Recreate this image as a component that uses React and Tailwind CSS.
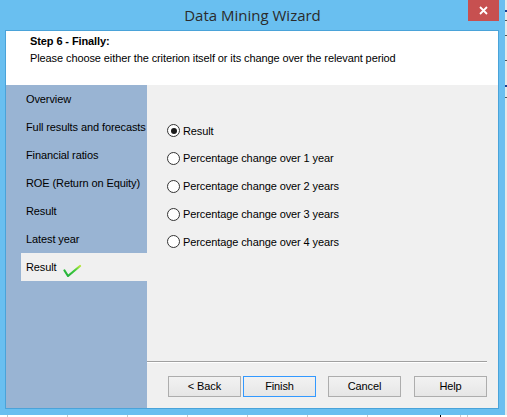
import React from "react";

const navItems = [
  "Overview",
  "Full results and forecasts",
  "Financial ratios",
  "ROE (Return on Equity)",
  "Result",
  "Latest year",
];

const options = [
  "Result",
  "Percentage change over 1 year",
  "Percentage change over 2 years",
  "Percentage change over 3 years",
  "Percentage change over 4 years",
];

function Check() {
  return (
    <svg width="19" height="20" viewBox="0 0 19 20" className="ml-[6px] shrink-0">
      <defs>
        <linearGradient id="chk" x1="0" y1="1" x2="1" y2="0">
          <stop offset="0" stopColor="#1fae3a" />
          <stop offset="0.6" stopColor="#3cc83c" />
          <stop offset="1" stopColor="#b7e63a" />
        </linearGradient>
      </defs>
      <path
        d="M1.5 13.5 L5 19 L17 9"
        fill="none"
        stroke="url(#chk)"
        strokeWidth="2.2"
        strokeLinecap="round"
        strokeLinejoin="round"
      />
    </svg>
  );
}

function Radio({ checked }) {
  return (
    <span className="w-[13px] h-[13px] rounded-full border border-[#333333] bg-white flex items-center justify-center shrink-0">
      {checked && <span className="w-[6px] h-[6px] rounded-full bg-[#1a1a1a]" />}
    </span>
  );
}

function Btn({ children, def, className = "" }) {
  return (
    <div
      className={
        "w-[73px] h-[21px] flex items-center justify-center border bg-gradient-to-b from-[#f2f2f2] to-[#e6e6e6] text-black " +
        (def ? "border-[#3399ff] " : "border-[#adadad] ") +
        className
      }
    >
      {children}
    </div>
  );
}

export default function App() {
  const font = { fontFamily: '"Liberation Sans", Arial, sans-serif' };
  return (
    <div className="w-[507px] h-[417px] bg-white overflow-hidden flex flex-col text-[11px] tracking-[-0.1px]" style={font}>
      <div className="flex">
        {/* Window */}
        <div className="w-[505px] h-[415px] bg-[#69bff0] flex flex-col">
          {/* Title bar */}
          <div className="h-[30px] relative flex items-center justify-center shrink-0">
            <span
              className="text-[15px] text-[#2b2b2b] leading-none pt-[1px] tracking-normal"
              style={{ fontFamily: '"Open Sans", "Noto Sans", sans-serif' }}
            >
              Data Mining Wizard
            </span>
            <div className="absolute top-0 right-[6px] w-[31px] h-[21px] bg-[#c75050] flex items-center justify-center">
              <svg width="9" height="9" viewBox="0 0 9 9">
                <path d="M1 1 L8 8 M8 1 L1 8" stroke="white" strokeWidth="1.8" />
              </svg>
            </div>
          </div>
          {/* Client area */}
          <div className="ml-[5px] w-[494px] h-[379px] border border-[#4aa3d9] flex flex-col">
            <div className="h-[54px] bg-white pl-[24px] pt-[2px] shrink-0">
              <div className="font-bold leading-[16px] text-black">Step 6 - Finally:</div>
              <div className="leading-[16px] mt-[1px] text-black">
                Please choose either the criterion itself or its change over the relevant period
              </div>
            </div>
            <div className="flex flex-1">
              {/* Sidebar */}
              <div className="w-[141px] bg-[#99b4d3] flex flex-col shrink-0">
                {navItems.map((t, i) => (
                  <div key={i} className="h-[28px] ml-[15px] pl-[5px] flex items-center text-black whitespace-nowrap">
                    {t}
                  </div>
                ))}
                <div className="h-[28px] ml-[15px] pl-[5px] flex items-center bg-[#f0f0f0] text-black">
                  <span>Result</span>
                  <Check />
                </div>
              </div>
              {/* Main */}
              <div className="flex-1 bg-[#f0f0f0] flex flex-col">
                <div className="flex-1 pt-[32px] pl-[20px] flex flex-col">
                  {options.map((o, i) => (
                    <div key={i} className="h-[27.75px] flex items-center gap-[3px] text-black">
                      <Radio checked={i === 0} />
                      <span>{o}</span>
                    </div>
                  ))}
                </div>
                <div className="mr-[11px] h-[1px] bg-[#a0a0a0]" />
                <div className="mr-[11px] h-[1px] bg-white" />
                <div className="flex justify-end pr-[11px] pt-[13px] pb-[11px]">
                  <Btn>&lt; Back</Btn>
                  <Btn def className="ml-[2px]">Finish</Btn>
                  <Btn className="ml-[12px]">Cancel</Btn>
                  <Btn className="ml-[13px]">Help</Btn>
                </div>
              </div>
            </div>
          </div>
        </div>
        {/* Right strip (background behind window) */}
        <div className="w-[2px] h-[415px] bg-[#e8e8e8] flex flex-col">
          <div className="h-[10px]" />
          <div className="h-[2px] bg-[#1f3f8f]" />
          <div className="h-[8px]" />
          <div className="h-[1px] bg-[#555]" />
          <div className="h-[14px]" />
          <div className="h-[1px] bg-[#555]" />
          <div className="h-[24px]" />
          <div className="h-[1px] bg-[#555]" />
          <div className="h-[24px]" />
          <div className="h-[2px] bg-[#1f3f8f]" />
          <div className="h-[10px]" />
          <div className="h-[1px] bg-[#555]" />
        </div>
      </div>
      {/* Bottom strip */}
      <div className="h-[2px] flex bg-white">
        <div className="w-[7px]" />
        {[0, 1, 2, 3, 4, 5].map((i) => (
          <div key={i} className="w-[60px] border-l border-[#c8c8c8]" />
        ))}
        <div className="w-[73px] border-l border-[#c8c8c8]" />
        <div className="w-[20px] border-l border-black" />
        <div className="w-[7px] border-l border-[#c8c8c8]" />
        <div className="flex-1 border-l border-[#c8c8c8]" />
      </div>
    </div>
  );
}
